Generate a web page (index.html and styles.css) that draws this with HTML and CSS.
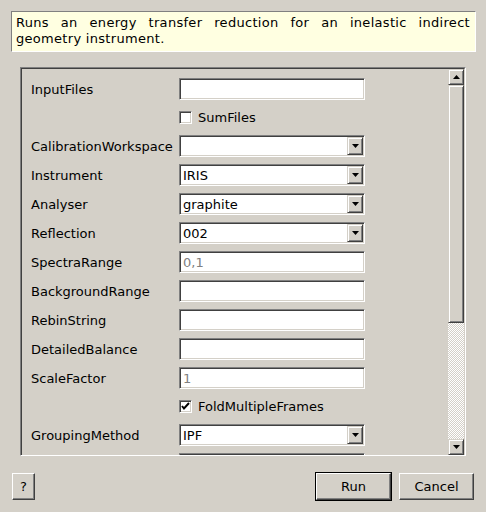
FILE: index.html
```html
<!DOCTYPE html>
<html>
<head>
<meta charset="utf-8">
<link rel="stylesheet" href="styles.css">
</head>
<body>
<div class="dialog">
  <div class="desc">Runs an energy transfer reduction for an inelastic indirect geometry instrument.</div>
  <div class="frame">
    <div class="viewport">
      <div class="form">
        <div class="label">InputFiles</div>
        <div class="field"></div>

        <div></div>
        <div class="check"><span class="box"></span><span>SumFiles</span></div>

        <div class="label">CalibrationWorkspace</div>
        <div class="field combo"><span class="val"></span><span class="drop"><svg width="7" height="4" viewBox="0 0 7 4"><path d="M0 0h7L3.5 4z" fill="#000"/></svg></span></div>

        <div class="label">Instrument</div>
        <div class="field combo"><span class="val">IRIS</span><span class="drop"><svg width="7" height="4" viewBox="0 0 7 4"><path d="M0 0h7L3.5 4z" fill="#000"/></svg></span></div>

        <div class="label">Analyser</div>
        <div class="field combo"><span class="val">graphite</span><span class="drop"><svg width="7" height="4" viewBox="0 0 7 4"><path d="M0 0h7L3.5 4z" fill="#000"/></svg></span></div>

        <div class="label">Reflection</div>
        <div class="field combo"><span class="val">002</span><span class="drop"><svg width="7" height="4" viewBox="0 0 7 4"><path d="M0 0h7L3.5 4z" fill="#000"/></svg></span></div>

        <div class="label">SpectraRange</div>
        <div class="field disabled">0,1</div>

        <div class="label">BackgroundRange</div>
        <div class="field"></div>

        <div class="label">RebinString</div>
        <div class="field"></div>

        <div class="label">DetailedBalance</div>
        <div class="field"></div>

        <div class="label">ScaleFactor</div>
        <div class="field disabled">1</div>

        <div></div>
        <div class="check"><span class="box"><svg width="9" height="9" viewBox="0 0 9 9"><path d="M1 4l2 2.5L8 1" fill="none" stroke="#000" stroke-width="2"/></svg></span><span>FoldMultipleFrames</span></div>

        <div class="label">GroupingMethod</div>
        <div class="field combo"><span class="val">IPF</span><span class="drop"><svg width="7" height="4" viewBox="0 0 7 4"><path d="M0 0h7L3.5 4z" fill="#000"/></svg></span></div>

        <div class="label"></div>
        <div class="field"></div>
      </div>
    </div>
    <div class="scrollbar">
      <div class="sbtn"><svg width="7" height="4" viewBox="0 0 7 4"><path d="M3.5 0L7 4H0z" fill="#000"/></svg></div>
      <div class="slider"></div>
      <div class="trough"></div>
      <div class="sbtn"><svg width="7" height="4" viewBox="0 0 7 4"><path d="M0 0h7L3.5 4z" fill="#000"/></svg></div>
    </div>
  </div>
  <div class="footer">
    <div class="btn help">?</div>
    <div class="spacer"></div>
    <div class="btn default">Run</div>
    <div class="btn">Cancel</div>
  </div>
</div>
</body>
</html>
```

FILE: styles.css
```css
html, body {
  margin: 0;
  padding: 0;
  background: #d4d0c8;
}
body {
  width: 486px;
  height: 512px;
  overflow: hidden;
  font-family: "DejaVu Sans", sans-serif;
  font-size: 13px;
  color: #000;
}
.dialog {
  display: flex;
  flex-direction: column;
  height: 512px;
}
.desc {
  margin: 11px 10px 0 11px;
  height: 41px;
  box-sizing: border-box;
  border: 1px solid;
  border-color: #808080 #ffffff #ffffff #808080;
  background: #ffffe1;
  padding: 3px 5px 0 4px;
  line-height: 16px;
  letter-spacing: 0.3px;
  text-align: justify;
}
.frame {
  margin: 15px 20px 0 20px;
  height: 389px;
  box-sizing: border-box;
  border: 1px solid;
  border-color: #808080 #ffffff #ffffff #808080;
  display: flex;
  background: #d4d0c8;
}
.viewport {
  flex: 1;
  overflow: hidden;
  border-top: 1px solid #404040;
  border-left: 1px solid #404040;
}
.form {
  display: grid;
  grid-template-columns: 148px 186px;
  row-gap: 7px;
  align-items: center;
  padding: 9px 0 0 9px;
}
.label {
  height: 22px;
  line-height: 23px;
  white-space: nowrap;
}
.field {
  height: 22px;
  box-sizing: border-box;
  border: 1px solid;
  border-color: #808080 #ffffff #ffffff #808080;
  box-shadow: inset 1px 1px #404040, inset -1px -1px #d4d0c8;
  background: #fff;
  padding-left: 3px;
  line-height: 21px;
  white-space: nowrap;
}
.field.disabled {
  color: #808080;
}
.combo {
  display: flex;
  align-items: stretch;
  padding: 1px 1px 1px 3px;
}
.combo .val {
  flex: 1;
  line-height: 19px;
}
.drop, .sbtn {
  width: 16px;
  box-sizing: border-box;
  border: 1px solid;
  border-color: #d4d0c8 #404040 #404040 #d4d0c8;
  box-shadow: inset 1px 1px #ffffff, inset -1px -1px #808080;
  background: #d4d0c8;
  display: flex;
  align-items: center;
  justify-content: center;
}
.drop {
  height: 18px;
}
.drop svg, .sbtn svg {
  display: block;
}
.check {
  height: 21px;
  display: flex;
  align-items: center;
  gap: 6px;
}
.box {
  width: 13px;
  height: 13px;
  box-sizing: border-box;
  border: 1px solid;
  border-color: #808080 #ffffff #ffffff #808080;
  box-shadow: inset 1px 1px #404040, inset -1px -1px #d4d0c8;
  background: #fff;
  display: flex;
  align-items: center;
  justify-content: center;
}
.scrollbar {
  width: 16px;
  display: flex;
  flex-direction: column;
  border-top: 1px solid #404040;
  border-right: 1px solid #d4d0c8;
}
.sbtn {
  height: 16px;
}
.slider {
  height: 238px;
  box-sizing: border-box;
  border: 1px solid;
  border-color: #d4d0c8 #404040 #404040 #d4d0c8;
  box-shadow: inset 1px 1px #ffffff, inset -1px -1px #808080;
  background: #d4d0c8;
}
.trough {
  flex: 1;
  background-color: #d4d0c8;
  background-image: conic-gradient(#ffffff 25%, #d4d0c8 0 50%, #ffffff 0 75%, #d4d0c8 0);
  background-size: 2px 2px;
}
.footer {
  display: flex;
  align-items: center;
  gap: 8px;
  margin-top: 17px;
  padding: 0 12px;
}
.spacer {
  flex: 1;
}
.btn {
  width: 75px;
  height: 27px;
  box-sizing: border-box;
  border: 1px solid;
  border-color: #ffffff #404040 #404040 #ffffff;
  box-shadow: inset -1px -1px #808080;
  background: #d4d0c8;
  display: flex;
  align-items: center;
  justify-content: center;
}
.btn.help {
  width: 23px;
}
.btn.default {
  outline: 1px solid #000;
}
```
